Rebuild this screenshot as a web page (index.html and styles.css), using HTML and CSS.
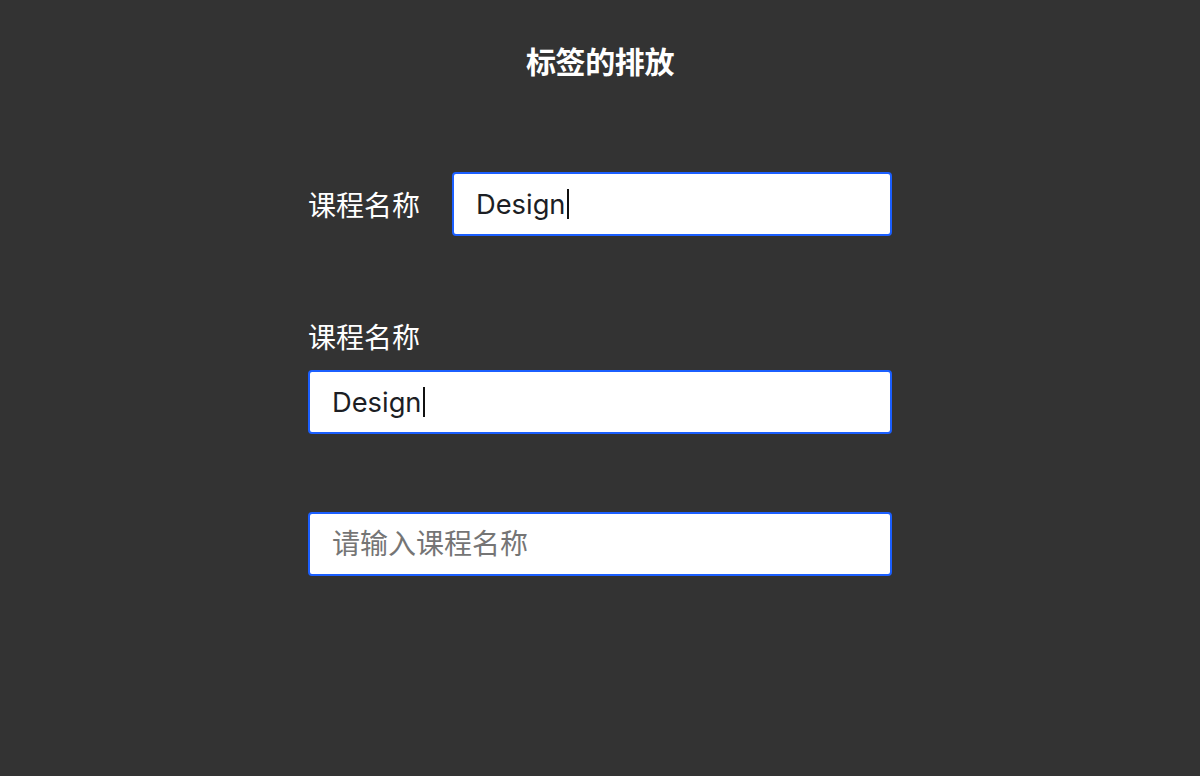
FILE: index.html
```html
<!DOCTYPE html>
<html lang="zh-CN">
  <head>
    <meta charset="UTF-8" />
    <meta name="viewport" content="width=device-width, initial-scale=1.0" />
    <title>标签的排放</title>
    <link rel="stylesheet" href="styles.css">
  </head>
  <body>
    <h1 class="title">标签的排放</h1>
    <form class="course-form">
      <div class="row-inline">
        <label class="label label-side">课程名称</label>
        <div class="field">Design<span class="caret"></span></div>
      </div>

      <div class="row-stacked">
        <label class="label">课程名称</label>
        <div class="field">Design<span class="caret"></span></div>
      </div>

      <div class="row-plain">
        <input class="field input-empty" placeholder="请输入课程名称" />
      </div>
    </form>
  </body>
</html>
```

FILE: styles.css
```css
* {
  box-sizing: border-box;
}
body {
  margin: 0;
  background: #333333;
  color: #ffffff;
  font-family: Inter, "Noto Sans CJK SC", sans-serif;
  min-height: 776px;
}
.title {
  margin: 0;
  padding-top: 42px;
  font-size: 30px;
  line-height: 40px;
  font-weight: 700;
  text-align: center;
  letter-spacing: -0.4px;
}
.course-form {
  width: 584px;
  margin: 90px auto 0 auto;
}
.label {
  display: block;
  font-size: 28px;
  line-height: 40px;
  font-family: "Noto Sans CJK SC", sans-serif;
}
.label-side {
  width: 144px;
  flex-shrink: 0;
}
.row-inline {
  display: flex;
  align-items: center;
}
.row-stacked {
  margin-top: 80px;
  display: flex;
  flex-direction: column;
  gap: 14px;
}
.row-plain {
  margin-top: 78px;
}
.field {
  display: flex;
  align-items: center;
  width: 100%;
  height: 64px;
  padding: 0 22px;
  background: #ffffff;
  border: 2px solid #1b5fff;
  border-radius: 4px;
  color: #1c1e24;
  font-size: 27.3px;
  font-family: Inter, "Noto Sans CJK SC", sans-serif;
}
.caret {
  display: inline-block;
  width: 2px;
  height: 30px;
  margin-left: 1px;
  background: #111111;
}
.input-empty {
  outline: none;
  font-size: 28px;
}
.input-empty::placeholder {
  color: #757575;
  font-family: "Noto Sans CJK SC", sans-serif;
}
```
